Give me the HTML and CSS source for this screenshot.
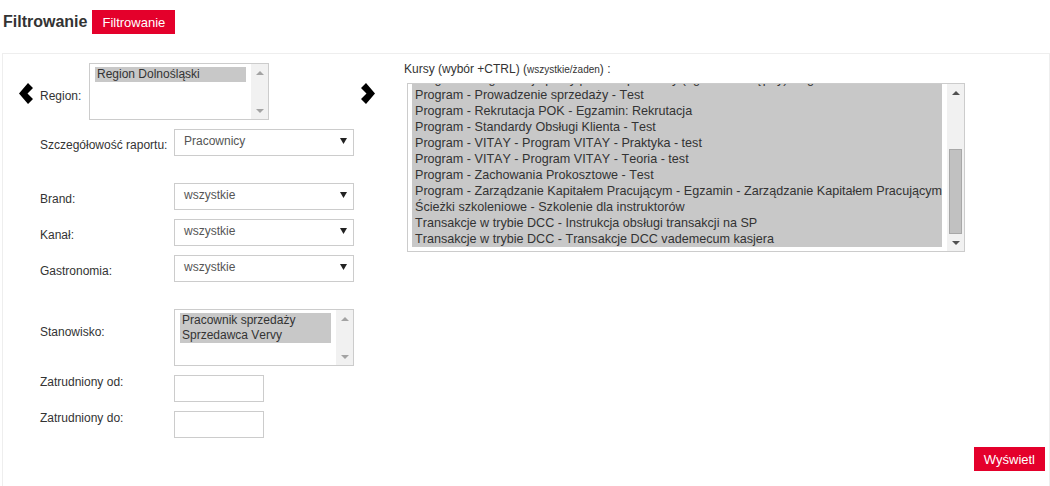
FILE: index.html
```html
<!DOCTYPE html>
<html lang="pl">
<head>
<meta charset="utf-8">
<title>Filtrowanie</title>
<link rel="stylesheet" href="styles.css">
</head>
<body>
<div class="header">
  <h1 class="title">Filtrowanie</h1>
  <button class="btn">Filtrowanie</button>
</div>
<div class="panel">
  <div class="cols">
    <div class="left">
      <div class="row row-region">
        <svg class="chev" width="14" height="21" viewBox="0 0 14 21"><polygon points="9,0 14,5 8.5,10.5 14,16 9,21 0,10.5" fill="#000"/></svg>
        <span class="lbl lbl-region">Region:</span>
        <div class="listbox lb-small">
          <div class="lb-opts">
            <div class="opt">Region Dolnośląski</div>
          </div>
          <div class="sb">
            <span class="sb-btn"><svg width="8" height="4" viewBox="0 0 8 4"><polygon points="0,4 8,4 4,0" fill="#a3a3a3"/></svg></span>
            <span class="sb-track"></span>
            <span class="sb-btn"><svg width="8" height="4" viewBox="0 0 8 4"><polygon points="0,0 8,0 4,4" fill="#a3a3a3"/></svg></span>
          </div>
        </div>
        <svg class="chev chev-right" width="14" height="21" viewBox="0 0 14 21"><polygon points="5,0 14,10.5 5,21 0,16 5.5,10.5 0,5" fill="#000"/></svg>
      </div>

      <div class="row">
        <span class="lbl">Szczegółowość raportu:</span>
        <div class="select"><span>Pracownicy</span><svg class="caret" width="7" height="6" viewBox="0 0 7 6"><polygon points="0,0 7,0 3.5,6" fill="#222"/></svg></div>
      </div>

      <div class="row sep">
        <span class="lbl">Brand:</span>
        <div class="select"><span>wszystkie</span><svg class="caret" width="7" height="6" viewBox="0 0 7 6"><polygon points="0,0 7,0 3.5,6" fill="#222"/></svg></div>
      </div>
      <div class="row">
        <span class="lbl">Kanał:</span>
        <div class="select"><span>wszystkie</span><svg class="caret" width="7" height="6" viewBox="0 0 7 6"><polygon points="0,0 7,0 3.5,6" fill="#222"/></svg></div>
      </div>
      <div class="row">
        <span class="lbl">Gastronomia:</span>
        <div class="select"><span>wszystkie</span><svg class="caret" width="7" height="6" viewBox="0 0 7 6"><polygon points="0,0 7,0 3.5,6" fill="#222"/></svg></div>
      </div>

      <div class="row sep">
        <span class="lbl lbl-stan">Stanowisko:</span>
        <div class="listbox lb-small">
          <div class="lb-opts">
            <div class="opt">Pracownik sprzedaży</div>
            <div class="opt">Sprzedawca Vervy</div>
          </div>
          <div class="sb">
            <span class="sb-btn"><svg width="8" height="4" viewBox="0 0 8 4"><polygon points="0,4 8,4 4,0" fill="#a3a3a3"/></svg></span>
            <span class="sb-track"></span>
            <span class="sb-btn"><svg width="8" height="4" viewBox="0 0 8 4"><polygon points="0,0 8,0 4,4" fill="#a3a3a3"/></svg></span>
          </div>
        </div>
      </div>
      <div class="row">
        <span class="lbl lbl-top">Zatrudniony od:</span>
        <input class="inp" type="text">
      </div>
      <div class="row">
        <span class="lbl lbl-top">Zatrudniony do:</span>
        <input class="inp" type="text">
      </div>
    </div>

    <div class="right">
      <div class="kursy-lbl">Kursy (wybór +CTRL) (<span class="small">wszystkie/żaden</span>) :</div>
      <div class="listbox lb-kursy">
        <div class="lb-opts lb-opts-k">
          <div class="k-list">
            <div class="opt opt-k">Program - Organizacja pracy punktu sprzedaży (egzamin wstępny) - Egzamin</div>
            <div class="opt opt-k">Program - Prowadzenie sprzedaży - Test</div>
            <div class="opt opt-k">Program - Rekrutacja POK - Egzamin: Rekrutacja</div>
            <div class="opt opt-k">Program - Standardy Obsługi Klienta - Test</div>
            <div class="opt opt-k">Program - VITAY - Program VITAY - Praktyka - test</div>
            <div class="opt opt-k">Program - VITAY - Program VITAY - Teoria - test</div>
            <div class="opt opt-k">Program - Zachowania Prokosztowe - Test</div>
            <div class="opt opt-k">Program - Zarządzanie Kapitałem Pracującym - Egzamin - Zarządzanie Kapitałem Pracującym</div>
            <div class="opt opt-k">Ścieżki szkoleniowe - Szkolenie dla instruktorów</div>
            <div class="opt opt-k">Transakcje w trybie DCC - Instrukcja obsługi transakcji na SP</div>
            <div class="opt opt-k">Transakcje w trybie DCC - Transakcje DCC vademecum kasjera</div>
          </div>
        </div>
        <div class="sb">
          <span class="sb-btn"><svg width="8" height="4" viewBox="0 0 8 4"><polygon points="0,4 8,4 4,0" fill="#505050"/></svg></span>
          <span class="sb-track"><span class="thumb"></span></span>
          <span class="sb-btn"><svg width="8" height="4" viewBox="0 0 8 4"><polygon points="0,0 8,0 4,4" fill="#505050"/></svg></span>
        </div>
      </div>
    </div>
  </div>
  <div class="footer">
    <button class="btn">Wyświetl</button>
  </div>
</div>
</body>
</html>
```

FILE: styles.css
```css
html, body {
  margin: 0;
  padding: 0;
  overflow: hidden;
  background: #fff;
}
body {
  font-family: "Liberation Sans", Arial, sans-serif;
  font-kerning: none;
  color: #333;
  font-size: 12px;
}
.header {
  display: flex;
  align-items: center;
  height: 53px;
  box-sizing: border-box;
  padding: 10px 0 19px 3px;
}
.title {
  margin: 0;
  font-size: 16px;
  font-weight: bold;
  color: #333;
  line-height: 18px;
}
.btn {
  background: #e4002b;
  color: #fff;
  border: none;
  height: 24px;
  padding: 0 10px;
  font-family: "Liberation Sans", Arial, sans-serif;
  font-kerning: none;
  font-size: 13px;
  line-height: 15px;
  cursor: pointer;
}
.header .btn {
  margin-left: 5px;
}
.panel {
  margin-left: 2px;
  width: 1048px;
  box-sizing: border-box;
  border: 1px solid #eee;
  padding: 9px 4px 0 17px;
  height: 460px;
}
.cols {
  display: grid;
  grid-template-columns: 356px 1fr;
  column-gap: 28px;
}
.left {
  display: flex;
  flex-direction: column;
  gap: 9px;
}
.row {
  display: flex;
  align-items: flex-start;
  padding-left: 20px;
}
.row.sep {
  margin-top: 18px;
}
.row-region {
  padding-left: 0;
}
.lbl {
  width: 134px;
  flex: none;
  line-height: 15px;
  padding-top: 9px;
  font-size: 12px;
  color: #333;
}
.lbl-region {
  width: 49px;
  padding-top: 26px;
}
.lbl-stan {
  padding-top: 16px;
}
.lbl-top {
  padding-top: 0;
}
.chev {
  flex: none;
  margin-top: 20px;
  margin-left: -1px;
  margin-right: 7px;
}
.chev-right {
  margin-left: 92px;
  margin-right: 0;
}
.select {
  width: 180px;
  height: 27px;
  box-sizing: border-box;
  border: 1px solid #ccc;
  background: #fff;
  padding: 4px 6px 0 9px;
  display: flex;
  justify-content: space-between;
  align-items: flex-start;
  font-size: 12px;
  line-height: 14px;
  color: #555;
}
.caret {
  margin-top: 4px;
}
.inp {
  width: 90px;
  height: 27px;
  box-sizing: border-box;
  border: 1px solid #ccc;
  margin: 0;
  padding: 0 6px;
  background: #fff;
  font-family: "Liberation Sans", Arial, sans-serif;
  font-size: 12px;
}
.listbox {
  display: flex;
  box-sizing: border-box;
  border: 1px solid #ccc;
  background: #fff;
}
.lb-small {
  width: 180px;
  height: 57px;
}
.lb-opts {
  flex: 1;
  min-width: 0;
  overflow: hidden;
  padding: 3px 5px 0 5px;
}
.opt {
  background: #c8c8c8;
  height: 15px;
  line-height: 15px;
  padding-left: 2px;
  font-size: 12px;
  white-space: nowrap;
  overflow: hidden;
  color: #333;
}
.sb {
  width: 17px;
  flex: none;
  background: #f1f1f1;
  display: flex;
  flex-direction: column;
}
.sb-btn {
  height: 17px;
  flex: none;
  display: flex;
  align-items: center;
  justify-content: center;
}
.sb-track {
  flex: 1;
  display: flex;
  flex-direction: column;
  justify-content: flex-end;
  padding: 0 2px;
}
.thumb {
  height: 85px;
  box-sizing: border-box;
  background: #c1c1c1;
  border: 1px solid #a8a8a8;
}
.right {
  display: flex;
  flex-direction: column;
}
.kursy-lbl {
  font-size: 12px;
  line-height: 14px;
  margin-top: -1px;
  margin-bottom: 6px;
  color: #333;
}
.small {
  font-size: 10px;
}
.lb-kursy {
  width: 558px;
  height: 169px;
  margin-left: 3px;
}
.lb-opts-k {
  padding: 0 5px 0 4px;
}
.k-list {
  margin-top: -13px;
}
.opt-k {
  height: 16px;
  line-height: 16px;
  font-size: 12.6px;
  padding-left: 3px;
}
.footer {
  display: flex;
  justify-content: flex-end;
  margin-top: 9px;
}
```
